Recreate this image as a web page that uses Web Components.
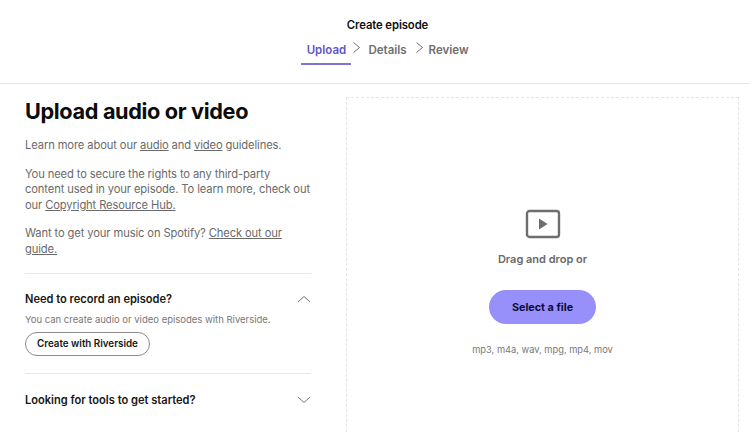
<!DOCTYPE html>
<html>
<head>
<meta charset="utf-8">
<style>
html, body { margin: 0; height: 100%; overflow: hidden; background: #fff; }
body { font-family: Inter, "Liberation Sans", sans-serif; color: #111; }
</style>
</head>
<body>
<episode-page></episode-page>

<script>
class EpisodeHeader extends HTMLElement {
    constructor() {
        super();
        this.attachShadow({ mode: 'open' });
        this.shadowRoot.innerHTML = `
            <style>
            :host {
                display: flex;
                flex-direction: column;
                align-items: center;
                box-sizing: border-box;
                height: 84px;
                padding-top: 18px;
                padding-left: 25px;
                border-bottom: 1px solid #e6e6e6;
            }
            h1 {
                margin: 0;
                font-size: 11.3px;
                line-height: 14px;
                font-weight: 600;
                color: #111;
                letter-spacing: -0.1px;
            }
            nav {
                display: flex;
                align-items: flex-start;
                margin-top: 4px;
                margin-right: 5px;
            }
            .step {
                height: 29px;
                box-sizing: border-box;
                padding: 7px 0 0;
                font-size: 11.5px;
                line-height: 14px;
                font-weight: 600;
                color: #6f6f6f;
            }
            .step.on {
                color: #5f54c7;
                width: 50px;
                text-align: center;
                border-bottom: 2px solid #7e73d6;
            }
            svg { display: block; margin-top: 5px; }
            .c1 { margin-left: 1px; margin-right: 7px; }
            .c2 { margin-left: 8px; margin-right: 5px; }
            </style>
            <h1>Create episode</h1>
            <nav>
                <div class="step on">Upload</div>
                <svg class="c1" width="9" height="13" viewBox="0 0 9 13" fill="none" stroke="#6f6f6f" stroke-width="1"><path d="M1.5 1.5 7.5 6.5 1.5 11.5"/></svg>
                <div class="step">Details</div>
                <svg class="c2" width="9" height="13" viewBox="0 0 9 13" fill="none" stroke="#6f6f6f" stroke-width="1"><path d="M1.5 1.5 7.5 6.5 1.5 11.5"/></svg>
                <div class="step">Review</div>
            </nav>
        `;
    }
}

class InfoPanel extends HTMLElement {
    constructor() {
        super();
        this.attachShadow({ mode: 'open' });
        this.shadowRoot.innerHTML = `
            <style>
            :host {
                display: block;
                width: 286px;
                flex: none;
            }
            h2 {
                margin: 0;
                font-size: 21.7px;
                line-height: 28px;
                font-weight: 700;
                color: #0c0c0c;
                letter-spacing: -0.35px;
            }
            p {
                margin: 13px 0 0;
                font-size: 11.2px;
                line-height: 15.6px;
                font-weight: 400;
                letter-spacing: -0.12px;
                color: #6a6a6a;
            }
            a { color: #6a6a6a; text-decoration: underline; }
            ep-accordion:first-of-type { margin-top: 15px; }
            </style>
            <h2>Upload audio or video</h2>
            <p>Learn more about our <a>audio</a> and <a>video</a> guidelines.</p>
            <p>You need to secure the rights to any third-party<br>content used in your episode. To learn more, check out our <a>Copyright Resource Hub.</a></p>
            <p>Want to get your music on Spotify? <a>Check out our guide.</a></p>
            <ep-accordion heading="Need to record an episode?" open>
                <div>You can create audio or video episodes with Riverside.</div>
                <pill-button>Create with Riverside</pill-button>
            </ep-accordion>
            <ep-accordion heading="Looking for tools to get started?"></ep-accordion>
        `;
    }
}

class EpAccordion extends HTMLElement {
    constructor() {
        super();
        this.attachShadow({ mode: 'open' });
        const open = this.hasAttribute('open');
        this.shadowRoot.innerHTML = `
            <style>
            :host {
                display: block;
                border-top: 1px solid #e8e8e8;
                padding: ${open ? '17px 0 17px' : '18px 0 0'};
            }
            .head {
                display: flex;
                justify-content: space-between;
                align-items: center;
                height: 16px;
                font-size: 11.1px;
                line-height: 16px;
                font-weight: 600;
                color: #161616;
            }
            svg { display: block; }
            .body {
                display: ${open ? 'block' : 'none'};
                margin-top: 6px;
                font-size: 9.5px;
                line-height: 14px;
                color: #777;
            }
            </style>
            <div class="head">
                <span>${this.getAttribute('heading')}</span>
                <svg width="14" height="8" viewBox="0 0 14 8" fill="none" stroke="#777" stroke-width="1">
                    <path d="${open ? 'M1 7 7 1.5 13 7' : 'M1 1 7 6.5 13 1'}"/>
                </svg>
            </div>
            <div class="body"><slot></slot></div>
        `;
    }
}

class PillButton extends HTMLElement {
    constructor() {
        super();
        this.attachShadow({ mode: 'open' });
        this.shadowRoot.innerHTML = `
            <style>
            :host {
                display: block;
                width: fit-content;
                margin-top: 5px;
            }
            button {
                display: block;
                box-sizing: border-box;
                height: 24px;
                width: 125px;
                padding: 0;
                background: #fff;
                border: 1px solid #8a8a8a;
                border-radius: 12px;
                font-family: inherit;
                font-size: 9.8px;
                font-weight: 600;
                color: #161616;
            }
            </style>
            <button><slot></slot></button>
        `;
    }
}

class UploadZone extends HTMLElement {
    constructor() {
        super();
        this.attachShadow({ mode: 'open' });
        this.shadowRoot.innerHTML = `
            <style>
            :host {
                display: flex;
                flex-direction: column;
                align-items: center;
                box-sizing: border-box;
                width: 393px;
                height: 345px;
                flex: none;
                margin-left: 35px;
                padding-top: 111px;
                border: 1px dashed #e4e4e4;
                border-bottom: 0;
            }
            svg { display: block; }
            .drag {
                margin-top: 13px;
                font-size: 11px;
                line-height: 14px;
                font-weight: 600;
                color: #6a6a6a;
            }
            button {
                display: block;
                margin-top: 24px;
                width: 107px;
                height: 34px;
                padding: 0;
                border: 0;
                border-radius: 17px;
                background: #9790fa;
                font-family: inherit;
                font-size: 10.8px;
                font-weight: 700;
                color: #0f0b3a;
            }
            .types {
                margin-top: 19px;
                font-size: 9.3px;
                line-height: 14px;
                color: #777;
            }
            </style>
            <svg width="36" height="30" viewBox="0 0 36 30" fill="none">
                <rect x="2" y="2" width="32" height="26" rx="2.5" stroke="#6e6e6e" stroke-width="2.4"/>
                <path d="M14 9.5 22.5 15 14 20.5Z" fill="#6e6e6e"/>
            </svg>
            <div class="drag">Drag and drop or</div>
            <button>Select a file</button>
            <div class="types">mp3, m4a, wav, mpg, mp4, mov</div>
        `;
    }
}

class EpisodePage extends HTMLElement {
    constructor() {
        super();
        this.attachShadow({ mode: 'open' });
        this.shadowRoot.innerHTML = `
            <style>
            :host { display: block; }
            main {
                display: flex;
                align-items: flex-start;
                padding: 13px 0 0 25px;
            }
            </style>
            <episode-header></episode-header>
            <main>
                <info-panel></info-panel>
                <upload-zone></upload-zone>
            </main>
        `;
    }
}

customElements.define('episode-header', EpisodeHeader);
customElements.define('ep-accordion', EpAccordion);
customElements.define('pill-button', PillButton);
customElements.define('info-panel', InfoPanel);
customElements.define('upload-zone', UploadZone);
customElements.define('episode-page', EpisodePage);
</script>
</body>
</html>
